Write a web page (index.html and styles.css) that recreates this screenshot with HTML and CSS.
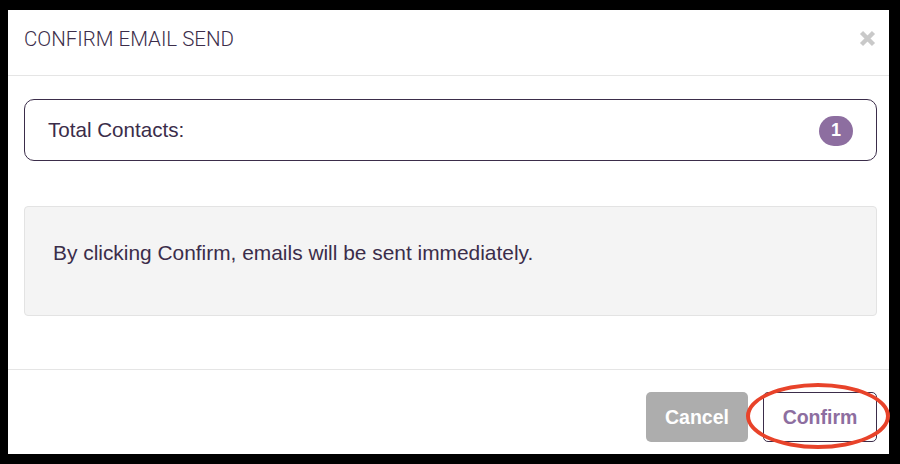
FILE: index.html
```html
<!DOCTYPE html>
<html>
<head>
<meta charset="utf-8">
<link rel="stylesheet" href="styles.css">
</head>
<body>
<div class="modal">
  <div class="modal-header">
    <h4 class="modal-title">CONFIRM EMAIL SEND</h4>
    <button class="close" aria-label="Close">
      <svg width="17" height="17" viewBox="0 0 17 17"><path d="M2.5 2.5 L14.5 14.5 M14.5 2.5 L2.5 14.5" stroke="#c9c9c9" stroke-width="4.4" stroke-linecap="butt"/></svg>
    </button>
  </div>
  <div class="modal-body">
    <div class="total-box">
      <span class="total-label">Total Contacts:</span>
      <span class="badge">1</span>
    </div>
    <div class="notice">
      <p>By clicking Confirm, emails will be sent immediately.</p>
    </div>
  </div>
  <div class="modal-footer">
    <button class="btn btn-cancel">Cancel</button>
    <button class="btn btn-confirm">Confirm</button>
  </div>
</div>
<div class="highlight"></div>
</body>
</html>
```

FILE: styles.css
```css
html, body {
  margin: 0;
  padding: 0;
  background: #000;
  width: 900px;
  height: 464px;
  overflow: hidden;
}
body {
  font-family: "Liberation Sans", Arial, sans-serif;
  color: #3b2d4a;
  position: relative;
}
.modal {
  margin: 10px 11px 0 8px;
  width: 881px;
  height: 444px;
  background: #fff;
  display: flex;
  flex-direction: column;
}
.modal-header {
  height: 66px;
  box-sizing: border-box;
  border-bottom: 1px solid #e5e5e5;
  display: flex;
  align-items: flex-start;
  justify-content: space-between;
  padding: 0 12px 0 16px;
}
.modal-title {
  margin: 0;
  padding-top: 16px;
  font-family: Roboto, "Liberation Sans", sans-serif;
  font-weight: 300;
  font-size: 20.5px;
  line-height: 26px;
  color: #3b2d4a;
}
.close {
  margin-top: 20px;
  margin-right: 1px;
  padding: 0;
  border: 0;
  background: none;
  width: 17px;
  height: 17px;
  display: flex;
}
.modal-body {
  flex: 1;
  padding: 23px 12px 0 16px;
  border-bottom: 1px solid #e5e5e5;
}
.total-box {
  height: 62px;
  box-sizing: border-box;
  border: 1px solid #3b2d4a;
  border-radius: 10px;
  display: flex;
  align-items: center;
  justify-content: space-between;
  padding: 0 23px 0 23px;
}
.total-label {
  font-size: 20.6px;
}
.badge {
  width: 34px;
  height: 30px;
  border-radius: 15px;
  background: #8d6ea0;
  color: #fff;
  font-weight: 700;
  font-size: 18px;
  display: flex;
  align-items: center;
  justify-content: center;
  margin-top: 1px;
}
.notice {
  margin-top: 45px;
  height: 110px;
  box-sizing: border-box;
  background: #f4f4f4;
  border: 1px solid #e3e3e3;
  border-radius: 4px;
  padding: 31px 28px 0 28px;
}
.notice p {
  margin: 0;
  font-size: 20.9px;
  line-height: 30px;
}
.modal-footer {
  height: 84px;
  box-sizing: border-box;
  display: flex;
  justify-content: flex-end;
  align-items: flex-start;
  gap: 15px;
  padding: 22px 12px 0 0;
}
.btn {
  height: 50px;
  border-radius: 5px;
  font-family: "Liberation Sans", Arial, sans-serif;
  font-weight: 700;
  font-size: 19.5px;
  padding: 0;
  box-sizing: border-box;
}
.btn-cancel {
  width: 102px;
  background: #adadad;
  color: #fff;
  border: 0;
}
.btn-confirm {
  width: 114px;
  background: #fff;
  color: #8d6ea0;
  border: 1px solid #3b2d4a;
}
.highlight {
  position: absolute;
  left: 746px;
  top: 383px;
  width: 144px;
  height: 66px;
  box-sizing: border-box;
  border: 4px solid #e8432a;
  border-radius: 50%;
}
```
